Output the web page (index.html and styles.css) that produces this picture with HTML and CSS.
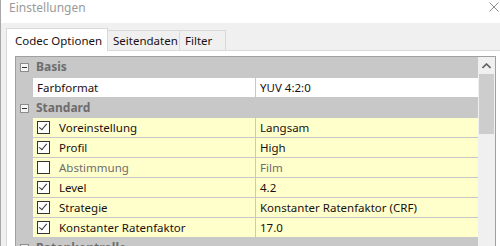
FILE: index.html
```html
<!DOCTYPE html>
<html>
<head>
  <link rel="stylesheet" href="styles.css">
</head>
<body>
  <div class="window">
    <div class="titlebar">
      <span class="title">Einstellungen</span>
      <svg class="close" width="10" height="10" viewBox="0 0 10 10">
        <path d="M0.5 0.5 L9.5 9.5 M9.5 0.5 L0.5 9.5" stroke="#8a8a8a" stroke-width="1" fill="none"/>
      </svg>
    </div>
    <div class="client">
      <div class="tabs">
        <div class="tab active">Codec Optionen</div>
        <div class="tab">Seitendaten</div>
        <div class="tab">Filter</div>
      </div>
      <div class="tabpage">
        <div class="grid">
          <div class="rows">
            <div class="row category">
              <div class="margin"><span class="toggle"></span></div>
              <div class="cat-label">Basis</div>
            </div>
            <div class="row">
              <div class="margin"></div>
              <div class="name">Farbformat</div>
              <div class="value">YUV 4:2:0</div>
            </div>
            <div class="row category">
              <div class="margin"><span class="toggle"></span></div>
              <div class="cat-label">Standard</div>
            </div>
            <div class="row option">
              <div class="margin"></div>
              <div class="name"><span class="check on"></span>Voreinstellung</div>
              <div class="value">Langsam</div>
            </div>
            <div class="row option">
              <div class="margin"></div>
              <div class="name"><span class="check on"></span>Profil</div>
              <div class="value">High</div>
            </div>
            <div class="row option disabled">
              <div class="margin"></div>
              <div class="name"><span class="check"></span>Abstimmung</div>
              <div class="value">Film</div>
            </div>
            <div class="row option">
              <div class="margin"></div>
              <div class="name"><span class="check on"></span>Level</div>
              <div class="value">4.2</div>
            </div>
            <div class="row option">
              <div class="margin"></div>
              <div class="name"><span class="check on"></span>Strategie</div>
              <div class="value">Konstanter Ratenfaktor (CRF)</div>
            </div>
            <div class="row option">
              <div class="margin"></div>
              <div class="name"><span class="check on"></span>Konstanter Ratenfaktor</div>
              <div class="value">17.0</div>
            </div>
            <div class="row category">
              <div class="margin"><span class="toggle"></span></div>
              <div class="cat-label">Ratenkontrolle</div>
            </div>
          </div>
          <div class="scrollbar">
            <div class="arrow">
              <svg width="9" height="6" viewBox="0 0 9 6">
                <path d="M0.5 5 L4.5 1 L8.5 5" stroke="#606060" stroke-width="1.6" fill="none"/>
              </svg>
            </div>
            <div class="thumb"></div>
          </div>
        </div>
      </div>
    </div>
  </div>
</body>
</html>
```

FILE: styles.css
```css
html, body {
  margin: 0;
  padding: 0;
  overflow: hidden;
}

body {
  width: 500px;
  height: 246px;
  font-family: "Noto Sans", "Open Sans", sans-serif;
  font-size: 11.5px;
  color: #1a1010;
}

.window {
  height: 246px;
  overflow: hidden;
  border-left: 1px solid #a8a8a8;
  background: #f0f0f0;
}

.titlebar {
  height: 23px;
  background: #fff;
  display: flex;
  align-items: flex-start;
  justify-content: space-between;
  padding: 0 1px 0 8px;
}

.title {
  font-size: 12px;
  line-height: 16px;
  color: #9a9a9a;
}

.close {
  margin-top: 2px;
}

.client {
  padding-left: 5px;
}

.tabs {
  display: flex;
  align-items: flex-end;
  height: 27px;
}

.tab {
  height: 20px;
  line-height: 19px;
  padding-left: 5px;
  border: 1px solid #d9d9d9;
  border-bottom: none;
  box-sizing: border-box;
  white-space: nowrap;
}

.tab + .tab {
  border-left: none;
}

.tab:nth-child(2) {
  width: 72px;
}

.tab:nth-child(3) {
  width: 46px;
}

.tab.active {
  width: 102px;
  height: 23px;
  padding-left: 8px;
  line-height: 24px;
  background: #fff;
  margin-bottom: -1px;
  position: relative;
  z-index: 1;
  font-size: 11.5px;
}

.tabpage {
  border: 1px solid #d9d9d9;
  border-bottom: none;
  background: #fff;
  margin-right: -4px;
  padding: 5px 7px 0 8px;
  height: 200px;
}

.grid {
  display: flex;
  border: 1px solid #a0a0a0;
  border-bottom: none;
  height: 200px;
}

.rows {
  flex: 1;
  background: #c8c8c8;
}

.row {
  display: flex;
  height: 20px;
}

.row.category:first-child {
  height: 21px;
}

.margin {
  width: 17px;
  flex-shrink: 0;
  display: flex;
  align-items: center;
  padding-left: 4px;
  box-sizing: border-box;
}

.toggle {
  width: 9px;
  height: 9px;
  box-sizing: border-box;
  border: 1px solid #8c8c8c;
  background: #f4f4f4;
  position: relative;
}

.toggle::after {
  content: "";
  position: absolute;
  left: 1px;
  top: 3px;
  width: 5px;
  height: 1px;
  background: #333;
}

.cat-label {
  font-weight: bold;
  font-size: 12px;
  color: #6d6d6d;
  line-height: 20px;
  padding-left: 3px;
  white-space: nowrap;
}

.name, .value {
  background: #fff;
  border-bottom: 1px solid #c8c8c8;
  line-height: 19px;
  white-space: nowrap;
  display: flex;
  align-items: center;
}

.name {
  width: 223px;
  border-right: 1px solid #c8c8c8;
  padding-left: 4px;
  box-sizing: border-box;
}

.value {
  flex: 1;
  padding-left: 4px;
}

.option .name, .option .value {
  background: #ffffcc;
}

.disabled .name, .disabled .value {
  color: #6d6d6d;
}

.check {
  width: 13px;
  height: 13px;
  box-sizing: border-box;
  border: 1px solid #333;
  background: #fff;
  margin-right: 9px;
  position: relative;
}

.check.on::after {
  content: "";
  position: absolute;
  left: 3px;
  top: 0px;
  width: 3px;
  height: 7px;
  border: solid #333;
  border-width: 0 1px 1px 0;
  transform: rotate(40deg);
}

.scrollbar {
  width: 17px;
  background: #f0f0f0;
  display: flex;
  flex-direction: column;
  align-items: center;
}

.arrow {
  width: 17px;
  height: 17px;
  display: flex;
  align-items: center;
  justify-content: center;
}

.thumb {
  width: 15px;
  height: 60px;
  background: #cdcdcd;
}
```
